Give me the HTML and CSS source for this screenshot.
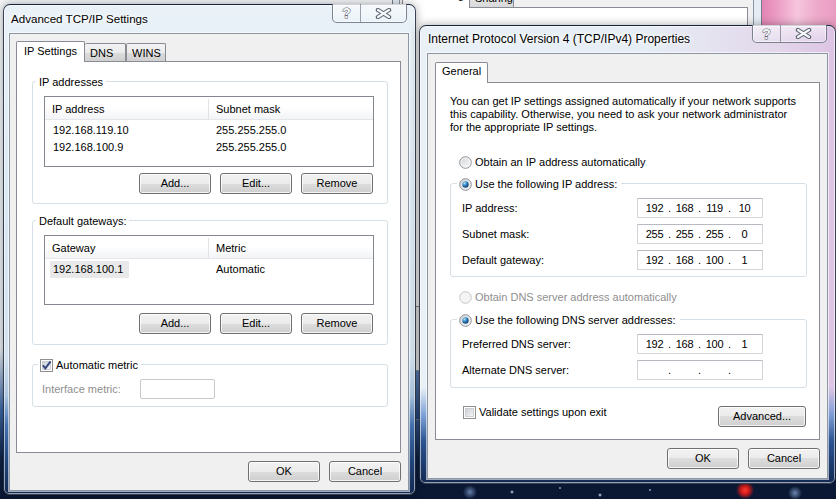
FILE: index.html
```html
<!DOCTYPE html>
<html>
<head>
<meta charset="utf-8">
<title>TCP/IP Settings</title>
<link rel="stylesheet" href="styles.css">
</head>
<body>
<div class="desktop">
  <div class="pink"></div>

  <div class="bgwin">
    <div class="bgclient">
      <div class="bgtabs"><span class="bgtab bgtab-net">Networking</span><span class="bgtab bgtab-share">Sharing</span></div>
      <div class="bgpanel"></div>
    </div>
  </div>

  <section class="win win-adv">
    <header class="titlebar">
      <span class="title">Advanced TCP/IP Settings</span>
      <div class="caption">
        <span class="cap-help">?</span>
        <span class="cap-close"><svg width="17" height="11" viewBox="0 0 17 11"><path d="M3 2 L14 9 M14 2 L3 9" stroke="#59616d" stroke-width="4.4" stroke-linecap="round"/><path d="M3 2 L14 9 M14 2 L3 9" stroke="#f6f7f9" stroke-width="2.2" stroke-linecap="round"/></svg></span>
      </div>
    </header>
    <div class="client">
      <div class="tabs">
        <div class="tab active">IP Settings</div>
        <div class="tab tab-dns">DNS</div>
        <div class="tab tab-wins">WINS</div>
      </div>
      <div class="panel panel-adv">
        <div class="group g1">
          <div class="group-title">IP addresses</div>
          <div class="lv lv1">
            <div class="lv-head"><span class="c1">IP address</span><span class="c2">Subnet mask</span></div>
            <div class="lv-row"><span class="c1">192.168.119.10</span><span class="c2">255.255.255.0</span></div>
            <div class="lv-row"><span class="c1">192.168.100.9</span><span class="c2">255.255.255.0</span></div>
          </div>
          <div class="btnrow"><button class="btn">Add...</button><button class="btn">Edit...</button><button class="btn">Remove</button></div>
        </div>

        <div class="group g2">
          <div class="group-title">Default gateways:</div>
          <div class="lv lv2">
            <div class="lv-head"><span class="c1">Gateway</span><span class="c2">Metric</span></div>
            <div class="lv-row"><span class="c1 c1-sel"><span class="sel">192.168.100.1</span></span><span class="c2">Automatic</span></div>
          </div>
          <div class="btnrow btnrow2"><button class="btn">Add...</button><button class="btn">Edit...</button><button class="btn">Remove</button></div>
        </div>

        <div class="group g3">
          <div class="group-title g3-title">
            <svg class="cb" width="13" height="13" viewBox="0 0 13 13"><rect x=".5" y=".5" width="12" height="12" fill="#fff" stroke="#8e8f8f"/><rect x="2.5" y="2.5" width="8" height="8" fill="url(#cbFill)" stroke="#c3c7cd" stroke-width=".8"/><path d="M2.9 6.2 L5.3 9.4 L10.6 2.4" fill="none" stroke="#33457e" stroke-width="1.9"/></svg>
            <span>Automatic metric</span>
          </div>
          <div class="metric-row">
            <span class="disabled">Interface metric:</span>
            <span class="metric-box"></span>
          </div>
        </div>
      </div>
      <div class="dlg-buttons"><button class="btn">OK</button><button class="btn">Cancel</button></div>
    </div>
  </section>

  <section class="win win-ipv4">
    <header class="titlebar">
      <span class="title">Internet Protocol Version 4 (TCP/IPv4) Properties</span>
      <div class="caption">
        <span class="cap-help">?</span>
        <span class="cap-close"><svg width="17" height="11" viewBox="0 0 17 11"><path d="M3 2 L14 9 M14 2 L3 9" stroke="#59616d" stroke-width="4.4" stroke-linecap="round"/><path d="M3 2 L14 9 M14 2 L3 9" stroke="#f6f7f9" stroke-width="2.2" stroke-linecap="round"/></svg></span>
      </div>
    </header>
    <div class="client">
      <div class="tabs">
        <div class="tab active tab-general">General</div>
      </div>
      <div class="panel panel-ipv4">
        <p class="intro">You can get IP settings assigned automatically if your network supports<br>this capability. Otherwise, you need to ask your network administrator<br>for the appropriate IP settings.</p>

        <div class="option opt1">
          <svg class="rb" width="13" height="13" viewBox="0 0 13 13"><circle cx="6.5" cy="6.5" r="5.8" fill="url(#rgFill)" stroke="#8b8e93"/><circle cx="6.5" cy="6.5" r="4.6" fill="none" stroke="#fff" stroke-opacity=".7"/></svg>
          <span>Obtain an IP address automatically</span>
        </div>

        <div class="group gip">
          <div class="group-title option">
            <svg class="rb" width="13" height="13" viewBox="0 0 13 13"><circle cx="6.5" cy="6.5" r="5.8" fill="url(#rgFill)" stroke="#8b8e93"/><circle cx="6.5" cy="6.5" r="3.2" fill="url(#rgDot)"/></svg>
            <span>Use the following IP address:</span>
          </div>
          <div class="field-row first"><span>IP address:</span><span class="ipfield"><span class="oct">192</span><span class="dot">.</span><span class="oct">168</span><span class="dot">.</span><span class="oct">119</span><span class="dot">.</span><span class="oct">10</span></span></div>
          <div class="field-row"><span>Subnet mask:</span><span class="ipfield"><span class="oct">255</span><span class="dot">.</span><span class="oct">255</span><span class="dot">.</span><span class="oct">255</span><span class="dot">.</span><span class="oct">0</span></span></div>
          <div class="field-row"><span>Default gateway:</span><span class="ipfield"><span class="oct">192</span><span class="dot">.</span><span class="oct">168</span><span class="dot">.</span><span class="oct">100</span><span class="dot">.</span><span class="oct">1</span></span></div>
        </div>

        <div class="option opt2 disabled">
          <svg class="rb" width="13" height="13" viewBox="0 0 13 13"><circle cx="6.5" cy="6.5" r="5.8" fill="#f4f4f4" stroke="#c6c7c9"/></svg>
          <span>Obtain DNS server address automatically</span>
        </div>

        <div class="group gdns">
          <div class="group-title option">
            <svg class="rb" width="13" height="13" viewBox="0 0 13 13"><circle cx="6.5" cy="6.5" r="5.8" fill="url(#rgFill)" stroke="#8b8e93"/><circle cx="6.5" cy="6.5" r="3.2" fill="url(#rgDot)"/></svg>
            <span>Use the following DNS server addresses:</span>
          </div>
          <div class="field-row first"><span>Preferred DNS server:</span><span class="ipfield"><span class="oct">192</span><span class="dot">.</span><span class="oct">168</span><span class="dot">.</span><span class="oct">100</span><span class="dot">.</span><span class="oct">1</span></span></div>
          <div class="field-row"><span>Alternate DNS server:</span><span class="ipfield"><span class="oct"></span><span class="dot">.</span><span class="oct"></span><span class="dot">.</span><span class="oct"></span><span class="dot">.</span><span class="oct"></span></span></div>
        </div>

        <div class="bottom-row">
          <div class="option validate">
            <svg class="cb" width="13" height="13" viewBox="0 0 13 13"><rect x=".5" y=".5" width="12" height="12" fill="#fff" stroke="#8e8f8f"/><rect x="2.5" y="2.5" width="8" height="8" fill="url(#cbFill)" stroke="#c3c7cd" stroke-width=".8"/></svg>
            <span>Validate settings upon exit</span>
          </div>
          <button class="btn btn-adv">Advanced...</button>
        </div>
      </div>
      <div class="dlg-buttons"><button class="btn">OK</button><button class="btn">Cancel</button></div>
    </div>
  </section>

  <svg class="defs" width="0" height="0" aria-hidden="true">
    <defs>
      <linearGradient id="rgFill" x1="0" y1="0" x2="1" y2="1"><stop offset="0" stop-color="#d2d4d8"/><stop offset="1" stop-color="#fbfbfb"/></linearGradient>
      <radialGradient id="rgDot" cx="0.35" cy="0.3" r="0.85"><stop offset="0" stop-color="#b4e2fb"/><stop offset="0.45" stop-color="#2c7bbb"/><stop offset="1" stop-color="#0a2d50"/></radialGradient>
      <linearGradient id="cbFill" x1="0" y1="0" x2="1" y2="1"><stop offset="0" stop-color="#c9cdd4"/><stop offset="1" stop-color="#f7f7f7"/></linearGradient>
    </defs>
  </svg>
</div>
</body>
</html>
```

FILE: styles.css
```css
* { box-sizing: border-box; }
html, body { margin: 0; padding: 0; }
body {
  width: 836px;
  height: 499px;
  overflow: hidden;
  font-family: "Liberation Sans", Arial, "DejaVu Sans", sans-serif;
  font-size: 11px;
  color: #000;
  background: #0a1732;
}

.desktop {
  position: relative;
  width: 836px;
  height: 499px;
  overflow: hidden;
  background:
    radial-gradient(circle at 745px 490px, #ff4034 0, #d81c1c 4px, rgba(160,0,0,0) 9px),
    radial-gradient(circle at 512px 492px, #d6e7ff 0, rgba(120,170,255,0) 2px),
    radial-gradient(circle at 560px 488px, #c4dbff 0, rgba(120,170,255,0) 1.5px),
    radial-gradient(circle at 600px 495px, #dbe9ff 0, rgba(120,170,255,0) 2px),
    radial-gradient(circle at 650px 490px, #c4dbff 0, rgba(120,170,255,0) 1.5px),
    radial-gradient(circle at 470px 492px, rgba(140,170,220,.7) 0, rgba(120,170,255,0) 7px),
    radial-gradient(circle at 795px 493px, rgba(150,180,230,.7) 0, rgba(120,170,255,0) 7px),
    linear-gradient(180deg, #f4f6f8 0, #e6ebf0 70%, #3d68a6 82%, #0f2246 92%, #0a1732 100%);
}

.defs { position: absolute; width: 0; height: 0; overflow: hidden; }

/* background desktop items */
.pink {
  position: absolute;
  left: 758px;
  top: 0;
  width: 78px;
  height: 40px;
  background: linear-gradient(90deg, #df7fb0 0%, #ec9dc5 25%, #f6c6dd 50%, #eeaacb 75%, #e99cc2 100%);
}

.bgwin {
  position: absolute;
  left: 392px;
  top: -40px;
  width: 370px;
  height: 460px;
  padding: 0 7px 0 6px;
  border: 1px solid rgba(40,50,70,.6);
  border-radius: 7px;
  background: linear-gradient(180deg, #e7eef5 0%, #dbe5ee 80%, #5a83bb 90%, #23487f 100%);
}
.bgclient {
  margin-top: 30px;
  height: 380px;
  background: #f0f0f0;
  border: 1px solid #8c97a3;
  padding: 0 5px 0 2px;
}
.bgtabs { display: flex; height: 15px; }
.bgtab {
  height: 15px;
  line-height: 13px;
  padding: 0 5px;
  border: 1px solid #898c95;
  border-top: none;
  border-bottom: none;
  white-space: nowrap;
}
.bgtab-net { width: 68px; background: #fff; margin-bottom: -1px; height: 16px; position: relative; line-height: 7px; overflow: hidden; padding-left: 6px; }
.bgtab-share { width: 44px; border-left: none; background: linear-gradient(#ececec, #d9d9d9); }
.bgpanel {
  height: 300px;
  background: #fff;
  border: 1px solid #898c95;
}

/* windows */
.win {
  position: absolute;
  display: flex;
  flex-direction: column;
  border: 1px solid rgba(25,35,55,.85);
  border-radius: 7px 7px 6px 6px;
  box-shadow: inset 0 0 0 1px rgba(255,255,255,.55), 0 0 10px rgba(0,0,0,.35);
}
.win-adv {
  left: 3px;
  top: 4px;
  width: 413px;
  height: 491px;
  padding: 0 6px 3px 5px;
  background: linear-gradient(180deg, #eaf2f8 0%, #dde9f3 35%, #d3e2ee 72%, #a9c4df 80%, #4573b1 86%, #22487f 93%, #132a52 100%);
}
.win-ipv4 {
  left: 419px;
  top: 25px;
  width: 417px;
  height: 459px;
  padding: 0 7px 4px 7px;
  background:
    linear-gradient(180deg, rgba(0,0,0,0) 0, rgba(0,0,0,0) 79%, rgba(110,150,210,.85) 85%, #2a5290 91%, #132a52 100%),
    linear-gradient(90deg, #e9f1f7 0%, #e6edf5 55%, #e3d8eb 85%, #dcc4e4 100%);
}

.titlebar { display: flex; align-items: flex-start; flex: none; }
.win-adv .titlebar { height: 28px; }
.win-ipv4 .titlebar { height: 27px; }
.title {
  font-size: 12px;
  line-height: 16px;
  white-space: nowrap;
  text-shadow: 0 0 6px #fff, 0 0 10px #fff, 0 0 3px #fff;
}
.win-adv .title { margin: 6px 0 0 2px; font-size: 11.6px; }
.win-ipv4 .title { margin: 5px 0 0 1px; }

.caption {
  display: flex;
  margin-left: auto;
  margin-top: -1px;
  border: 1px solid rgba(45,55,75,.6);
  border-top: none;
  border-radius: 0 0 5px 5px;
  background: linear-gradient(180deg, rgba(255,255,255,.55), rgba(255,255,255,.15));
  box-shadow: inset 0 0 0 1px rgba(255,255,255,.55);
  overflow: hidden;
}
.win-adv .caption { height: 19px; margin-right: 2px; }
.win-ipv4 .caption { height: 18px; margin-right: 1px; }
.cap-help {
  width: 28px;
  display: flex;
  align-items: center;
  justify-content: center;
  font-family: "Liberation Sans", Arial, sans-serif;
  font-weight: bold;
  font-size: 14px;
  line-height: 14px;
  color: #f4f5f7;
  -webkit-text-stroke: 1px #59616d;
  paint-order: stroke fill;
  border-right: 1px solid rgba(45,55,75,.45);
}
.cap-close {
  width: 45px;
  display: flex;
  align-items: center;
  justify-content: center;
}

/* client area */
.client {
  flex: 1;
  display: flex;
  flex-direction: column;
  background: #f0f0f0;
  border: 1px solid #8c97a3;
  box-shadow: 0 0 0 1px rgba(255,255,255,.6);
}
.win-adv .client { padding: 7px 7px 8px 6px; }
.win-ipv4 .client { padding: 8px 7px 9px 7px; }

.tabs {
  display: flex;
  align-items: flex-end;
  height: 20px;
  flex: none;
}
.tab {
  height: 18px;
  padding: 1px 5px 0;
  line-height: 16px;
  border: 1px solid #898c95;
  border-bottom: none;
  border-radius: 2px 2px 0 0;
  background: linear-gradient(180deg, #f3f3f3 0%, #ebebeb 50%, #dddddd 50%, #cfcfcf 100%);
  white-space: nowrap;
}
.tab.active {
  position: relative;
  z-index: 1;
  height: 21px;
  margin-bottom: -1px;
  padding: 0 7px;
  line-height: 19px;
  background: #fff;
}
.tab-dns { width: 41px; border-left: none; padding-left: 5px; }
.tab-wins { width: 40px; padding-left: 5px; }
.tab.tab-general { width: 53px; padding: 0 6px; line-height: 17px; }

.panel {
  flex: 1;
  background: #fff;
  border: 1px solid #898c95;
}
.panel-adv { padding: 19px 12px 0 15px; }
.panel-ipv4 { padding: 12px 12px 0 14px; }

.dlg-buttons {
  display: flex;
  justify-content: flex-end;
  gap: 9px;
  margin-top: 8px;
  flex: none;
}

.btn {
  font: inherit;
  font-size: 11px;
  color: #000;
  width: 72px;
  height: 21px;
  padding: 0;
  line-height: 19px;
  border: 1px solid #707070;
  border-radius: 3px;
  background: linear-gradient(180deg, #f2f2f2 0%, #ebebeb 50%, #dddddd 50%, #cfcfcf 100%);
  box-shadow: inset 0 0 0 1px rgba(255,255,255,.75);
}
.btn-adv { width: 88px; margin-right: 1px; }

/* group boxes */
.group {
  border: 1px solid #d5dfe5;
  border-radius: 3px;
}
.group-title {
  width: fit-content;
  background: #fff;
  line-height: 14px;
  height: 14px;
  margin-top: -7px;
  padding: 0 3px;
  white-space: nowrap;
}
.g1, .g2 { padding: 0 13px 9px 11px; }
.g1 .group-title, .g2 .group-title { margin-left: -8px; }
.g2 { margin-top: 16px; padding-bottom: 10px; }
.g3 { margin-top: 19px; padding: 0 13px 7px 9px; }
.g3-title { display: flex; align-items: center; gap: 3px; margin-left: -4px; padding: 0 3px 0 2px; }

.lv {
  border: 1px solid #828790;
  background: #fff;
  margin-top: 7px;
}
.lv1 { height: 71px; }
.lv2 { height: 70px; }
.lv-head {
  display: flex;
  height: 23px;
  padding-top: 2px;
  line-height: 20px;
  margin-bottom: 2px;
  background: linear-gradient(180deg, #ffffff 0%, #ffffff 45%, #f3f4f6 100%);
  border-bottom: 1px solid #e4e6e9;
}
.lv-head .c1 { border-right: 1px solid #e1e3e6; padding-left: 7px; }
.c1 { width: 164px; padding-left: 8px; flex: none; }
.c2 { padding-left: 7px; }
.lv-row { display: flex; height: 17px; line-height: 17px; }
.c1-sel { padding-left: 5px; }
.sel { display: inline-block; background: #e9e9e9; padding: 0 6px 0 3px; }

.btnrow {
  display: flex;
  justify-content: flex-end;
  gap: 9px;
  margin-top: 6px;
  margin-right: 1px;
}
.btnrow2 { margin-top: 8px; }

.metric-row {
  display: flex;
  align-items: center;
  margin-top: 7px;
  height: 20px;
}
.metric-row .disabled { width: 98px; }
.metric-box {
  width: 75px;
  height: 20px;
  border: 1px solid #c8c8c8;
  border-radius: 2px;
  background: #fff;
}
.disabled { color: #8f8f8f; }

/* IPv4 panel */
.intro {
  margin: 0;
  line-height: 13px;
  white-space: nowrap;
}
.option {
  display: flex;
  align-items: center;
  gap: 3px;
  line-height: 14px;
  height: 14px;
  white-space: nowrap;
}
.opt1 { margin: 21px 0 0 9px; }
.gip { margin-top: 14px; padding: 0 43px 6px 11px; }
.gdns { margin-top: 15px; padding: 0 43px 7px 11px; }
.gip .group-title, .gdns .group-title { margin-left: -5px; padding: 0 4px 0 2px; }
.opt2 { margin: 13px 0 0 9px; }

.field-row {
  display: flex;
  justify-content: space-between;
  align-items: center;
  height: 20px;
  margin-top: 6px;
}
.field-row.first { margin-top: 7px; }
.ipfield {
  display: flex;
  width: 126px;
  height: 20px;
  padding-left: 4px;
  align-items: center;
  border: 1px solid #d2d5da;
  border-top-color: #b7bac0;
  background: #fff;
}
.oct { width: 25px; text-align: center; letter-spacing: -0.3px; }
.dot { width: 5px; text-align: center; }

.bottom-row {
  display: flex;
  justify-content: space-between;
  align-items: flex-start;
  margin-top: 18px;
}
.validate { margin: -1px 0 0 13px; }
```
